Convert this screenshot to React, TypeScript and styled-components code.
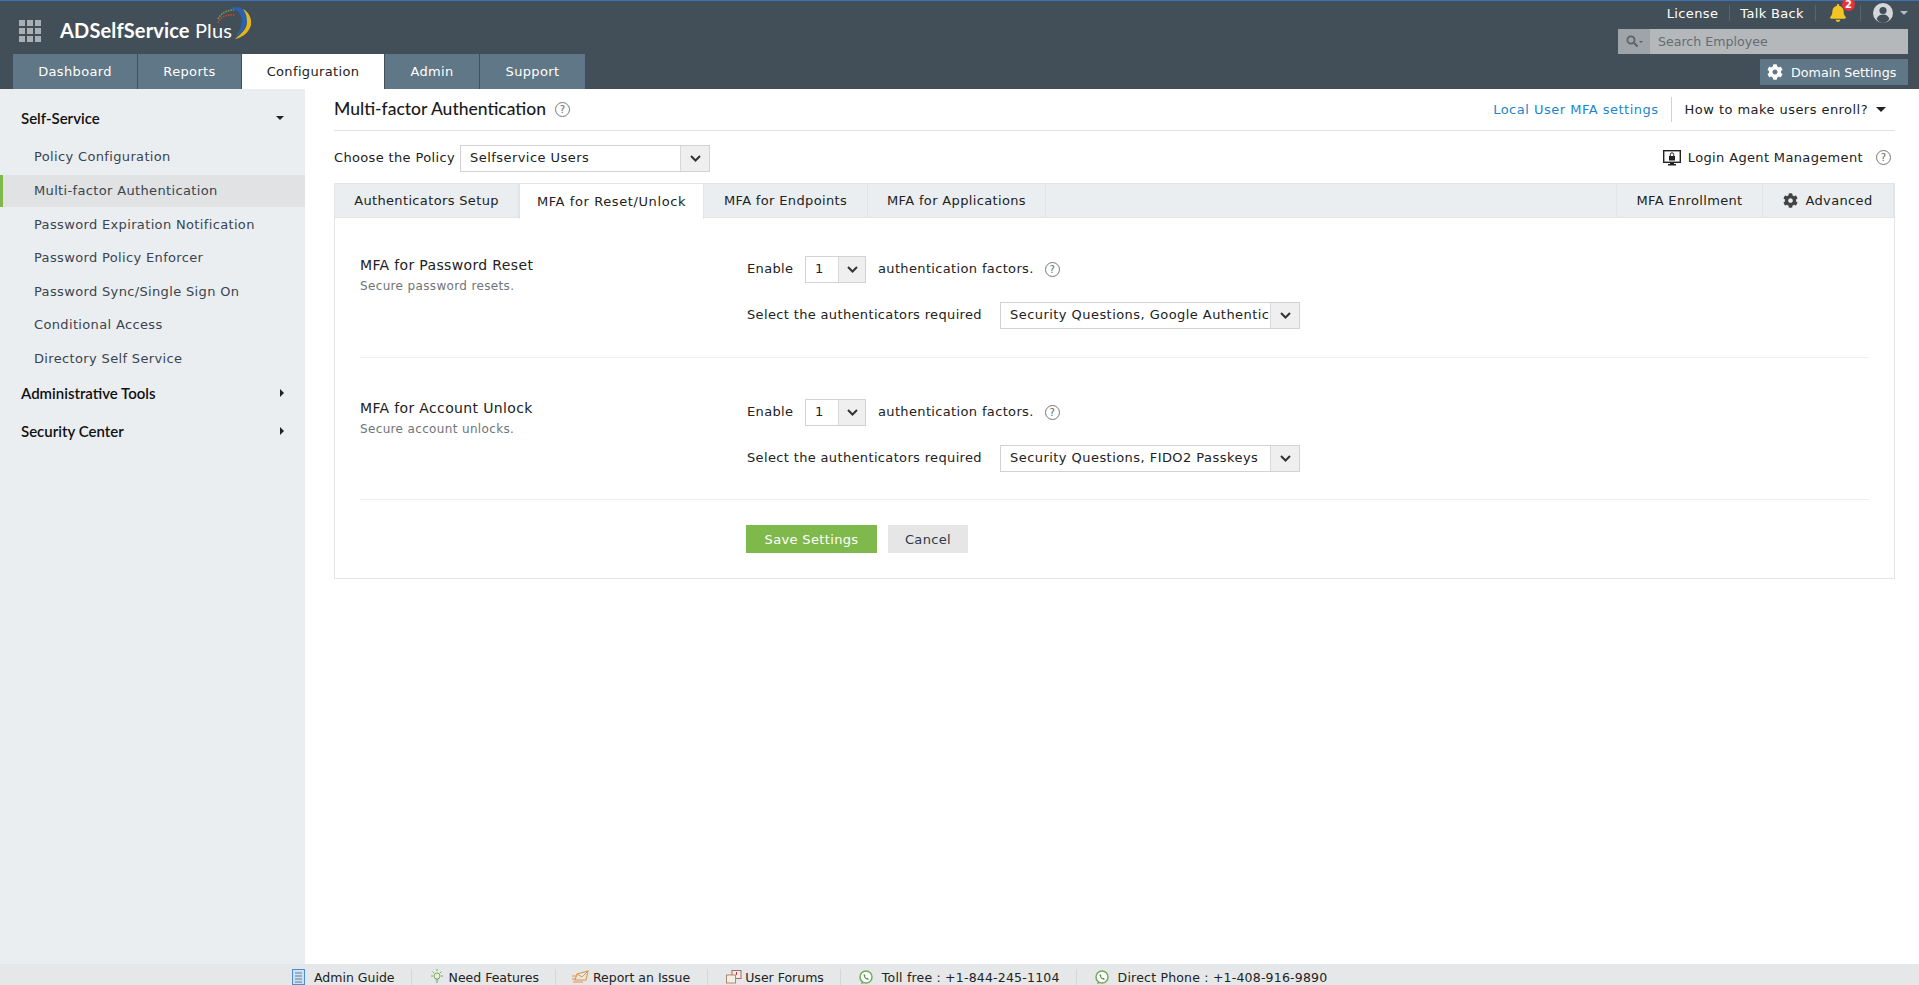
import styled, { createGlobalStyle } from "styled-components";
import { FaCog, FaBell } from "react-icons/fa";

const GlobalStyle = createGlobalStyle`
  html, body {
    margin: 0;
    padding: 0;
    height: 100%;
    overflow: hidden;
    background: #fff;
  }
  * {
    box-sizing: border-box;
  }
  body {
    font-family: "DejaVu Sans", Verdana, sans-serif;
    font-size: 13px;
    letter-spacing: 0.35px;
    color: #222;
  }
`;

const Page = styled.div`
  display: flex;
  flex-direction: column;
  width: 1919px;
  height: 985px;
  overflow: hidden;
`;

const Header = styled.header`
  display: flex;
  justify-content: space-between;
  height: 89px;
  flex: none;
  background: #424f58;
  border-top: 1px solid #3b74b4;
`;

const HeaderLeft = styled.div`
  display: flex;
  flex-direction: column;
  padding-left: 13px;
`;

const Brand = styled.div`
  display: flex;
  align-items: center;
  height: 53px;
  padding-left: 6px;
  position: relative;
`;

const AppGrid = styled.div`
  display: grid;
  grid-template-columns: repeat(3, 6px);
  grid-auto-rows: 6px;
  gap: 2px;
  margin-right: 18px;
  margin-top: 6px;

  span {
    background: #a9b0b5;
  }
`;

const BrandName = styled.div`
  font-family: Lato, sans-serif;
  font-size: 20px;
  color: #fff;
  margin: 4px 0 0 1px;
  letter-spacing: 0.15px;

  b {
    font-weight: 700;
  }

  span {
    font-weight: 400;
  }
`;

const Swoosh = styled.svg`
  position: absolute;
  left: 192px;
  top: 1px;
`;

const NavTabs = styled.nav`
  display: flex;
  height: 35px;
  gap: 1px;
`;

const NavTab = styled.div<{ $active?: boolean; $w: number }>`
  display: flex;
  align-items: center;
  justify-content: center;
  width: ${(p) => p.$w}px;
  background: ${(p) => (p.$active ? "#fff" : "#5f7786")};
  color: ${(p) => (p.$active ? "#222" : "#fff")};
`;

const HeaderRight = styled.div`
  display: flex;
  flex-direction: column;
  align-items: flex-end;
  padding-right: 11px;
`;

const TopLinks = styled.div`
  display: flex;
  align-items: center;
  height: 26px;
  padding-bottom: 2px;
  color: #fff;
`;

const TopLink = styled.div`
  padding: 0 10px;
  margin-right: 1px;
`;

const TopSep = styled.div`
  width: 1px;
  height: 16px;
  background: #56666c;
`;

const BellWrap = styled.div`
  position: relative;
  width: 31px;
  padding-left: 13px;
  margin-right: 13px;
  display: flex;
  align-items: center;
  color: #f3c522;
  font-size: 18px;
`;

const Badge = styled.span`
  position: absolute;
  left: 26px;
  top: -6px;
  width: 13px;
  height: 13px;
  border-radius: 50%;
  background: #e8303a;
  color: #fff;
  font-size: 10px;
  font-weight: 700;
  letter-spacing: 0;
  line-height: 13px;
  text-align: center;
`;

const Caret = styled.span<{ $color?: string; $dir?: "down" | "right"; $size?: number }>`
  display: inline-block;
  width: 0;
  height: 0;
  ${(p) =>
    p.$dir === "right"
      ? `border-top: ${p.$size ?? 4}px solid transparent;
         border-bottom: ${p.$size ?? 4}px solid transparent;
         border-left: ${p.$size ?? 4}px solid ${p.$color ?? "#222"};`
      : `border-left: ${p.$size ?? 4}px solid transparent;
         border-right: ${p.$size ?? 4}px solid transparent;
         border-top: ${p.$size ?? 4}px solid ${p.$color ?? "#222"};`}
`;

const Avatar = styled.svg`
  margin: 0 7px 0 12px;
`;

const SearchBox = styled.div`
  display: flex;
  width: 290px;
  height: 25px;
  margin-top: 2px;
  background: #b4b8bb;
`;

const SearchIcon = styled.div`
  display: flex;
  align-items: center;
  justify-content: center;
  gap: 1px;
  width: 32px;
  background: #9fa4a8;
`;

const SearchText = styled.div`
  display: flex;
  align-items: center;
  padding-left: 8px;
  font-size: 12.6px;
  letter-spacing: 0;
  color: #656d73;
`;

const DomainButton = styled.div`
  display: flex;
  align-items: center;
  width: 148px;
  height: 26px;
  margin-top: 5px;
  padding-left: 7px;
  gap: 8px;
  background: #5f7786;
  color: #fff;
  font-size: 16px;

  span {
    font-size: 12.7px;
    letter-spacing: 0;
  }
`;

const Body = styled.div`
  display: flex;
  flex: 1;
  min-height: 0;
`;

const Sidebar = styled.aside`
  width: 305px;
  flex: none;
  background: #ebeef0;
  padding-top: 12px;
`;

const SideHead = styled.div<{ $gap?: number }>`
  display: flex;
  align-items: center;
  justify-content: space-between;
  height: 34px;
  margin-top: ${(p) => p.$gap ?? 0}px;
  padding: 0 21px;
  font-family: Lato, sans-serif;
  font-size: 15px;
  font-weight: 600;
  letter-spacing: 0;
  color: #111;
`;

const SideList = styled.div`
  display: flex;
  flex-direction: column;
  margin-top: 5px;
`;

const SideItem = styled.div<{ $active?: boolean }>`
  display: flex;
  align-items: center;
  height: ${(p) => (p.$active ? 32 : 33.5)}px;
  margin: ${(p) => (p.$active ? "1px 0" : "0")};
  padding-left: ${(p) => (p.$active ? 31 : 34)}px;
  color: #3a4450;
  background: ${(p) => (p.$active ? "#e0e2e4" : "transparent")};
  border-left: ${(p) => (p.$active ? "3px solid #7fb94b" : "none")};
`;

const Main = styled.main`
  flex: 1;
  padding: 0 24px 0 29px;
`;

const TitleRow = styled.div`
  display: flex;
  align-items: center;
  height: 42px;
  border-bottom: 1px solid #e2e2e2;
`;

const Title = styled.h1`
  margin: 0 0 2px;
  font-family: Lato, sans-serif;
  font-size: 17.5px;
  font-weight: 500;
  letter-spacing: 0;
  color: #1b1b1b;
`;

const Help = styled.span<{ $left?: number }>`
  display: inline-block;
  flex: none;
  width: 15px;
  height: 15px;
  margin-left: ${(p) => p.$left ?? 0}px;
  border: 1px solid #777;
  border-radius: 50%;
  color: #666;
  font-size: 10px;
  letter-spacing: 0;
  line-height: 13px;
  text-align: center;
`;

const TitleActions = styled.div`
  display: flex;
  align-items: center;
  margin-left: auto;
  padding-right: 9px;
`;

const BlueLink = styled.a`
  color: #1d85cd;
  padding-right: 12px;
  border-right: 1px solid #d0d0d0;
  line-height: 25px;
  letter-spacing: 0.5px;
`;

const Enroll = styled.div`
  display: flex;
  align-items: center;
  gap: 8px;
  margin-left: 13px;
  letter-spacing: 0.45px;
`;

const PolicyRow = styled.div`
  display: flex;
  align-items: center;
  height: 52px;
  padding-top: 2px;
`;

const PolicyLabel = styled.span`
  width: 126px;
  margin-bottom: 2px;
`;

const SelectBox = styled.div<{ $w: number; $arrow: number }>`
  display: flex;
  width: ${(p) => p.$w}px;
  height: 27px;
  border: 1px solid #d0d2d4;
  background: #fff;
  flex: none;

  > span {
    flex: 1;
    min-width: 0;
    padding-left: 9px;
    white-space: nowrap;
    overflow: hidden;
    line-height: 24px;
    letter-spacing: 0.45px;
  }

  > i {
    display: flex;
    align-items: center;
    justify-content: center;
    flex: none;
    width: ${(p) => p.$arrow}px;
    background: #efefef;
    border-left: 1px solid #d8d8d8;
  }
`;

const AgentLink = styled.div`
  display: flex;
  align-items: center;
  margin: 0 0 1px auto;
  padding-right: 4px;
`;

const AgentIcon = styled.svg`
  margin-right: 7px;
`;

const TabBar = styled.div`
  display: flex;
  height: 35px;
  background: #ebeef0;
  border: 1px solid #e2e4e6;
`;

const PanelTab = styled.div<{ $w: number; $active?: boolean }>`
  display: flex;
  align-items: center;
  justify-content: center;
  gap: 7px;
  width: ${(p) => p.$w}px;
  height: ${(p) => (p.$active ? 35 : 33)}px;
  background: ${(p) => (p.$active ? "#fff" : "transparent")};
  border-right: 1px solid #e2e4e6;
  border-left: ${(p) => (p.$active ? "1px solid #e2e4e6" : "none")};
  letter-spacing: ${(p) => (p.$active ? 0.6 : 0.35)}px;
`;

const TabSpacer = styled.div`
  flex: 1;
  border-right: 1px solid #e2e4e6;
`;

const Panel = styled.section`
  height: 361px;
  padding: 0 25px;
  border: 1px solid #e2e4e6;
  border-top: none;
`;

const FactorRow = styled.div<{ $h: number; $top: number }>`
  display: grid;
  grid-template-columns: 387px 1fr;
  height: ${(p) => p.$h}px;
  border-bottom: 1px solid #eeeeee;
  padding-top: ${(p) => p.$top}px;
`;

const FactorTitle = styled.div`
  font-size: 14px;
  line-height: 20px;
  margin-top: -1px;
  color: #222;
`;

const FactorSub = styled.div`
  font-size: 12px;
  line-height: 16px;
  margin-top: 3px;
  color: #6f7478;
`;

const Line = styled.div`
  display: flex;
  align-items: center;
  height: 27px;
  margin-bottom: 19px;
`;

const EnableLabel = styled.span`
  width: 58px;
  margin-bottom: 2px;
`;

const FactorsLabel = styled.span`
  margin: 0 0 2px 12px;
`;

const RequiredLabel = styled.span`
  width: 253px;
  margin-bottom: 2px;
`;

const Buttons = styled.div`
  display: flex;
  gap: 11px;
  padding: 25px 0 0 386px;
`;

const Btn = styled.div<{ $w: number; $primary?: boolean }>`
  display: flex;
  align-items: center;
  justify-content: center;
  width: ${(p) => p.$w}px;
  height: 28px;
  background: ${(p) => (p.$primary ? "#7fb94b" : "#e6e6e6")};
  color: ${(p) => (p.$primary ? "#fff" : "#2b3a4a")};
`;

const Footer = styled.footer`
  display: flex;
  align-items: flex-start;
  height: 21px;
  flex: none;
  padding: 5px 0 0 292px;
  background: #e5e7e8;
  font-size: 12.5px;
  letter-spacing: 0;
  color: #222;
`;

const FootItem = styled.div<{ $gap: number; $phone?: boolean }>`
  display: flex;
  align-items: center;
  gap: ${(p) => p.$gap}px;
  height: 16px;
  white-space: nowrap;
  letter-spacing: ${(p) => (p.$phone ? 0.2 : 0)}px;
`;

const FootSep = styled.div<{ $left: number; $right: number }>`
  width: 1px;
  height: 16px;
  margin: 0 ${(p) => p.$right}px 0 ${(p) => p.$left}px;
  background: #d4d8da;
`;

function Chevron() {
  return (
    <svg width="11" height="7" viewBox="0 0 11 7">
      <path d="M1 1l4.5 4.5L10 1" fill="none" stroke="#333" strokeWidth="2" />
    </svg>
  );
}

function Select({ w, arrow, value }: { w: number; arrow: number; value: string }) {
  return (
    <SelectBox $w={w} $arrow={arrow}>
      <span>{value}</span>
      <i>
        <Chevron />
      </i>
    </SelectBox>
  );
}

function LogoArcs() {
  return (
    <Swoosh width="60" height="45" viewBox="0 0 60 45">
      <path d="M25 6C33 3 40 7 42 13 44 21 38 31 30 35 36 28 38 20 36 14 34 9 30 7 25 6z" fill="#2a62ad" />
      <path d="M38 7C44 10 47 17 46 23 44 31 36 36 30 37 36 32 42 27 42 20 42 15 41 11 38 7z" fill="#e6b71c" />
      <path d="M13 17C16 11 22 8 29 8" fill="none" stroke="#6f9a5a" strokeWidth="1.6" strokeDasharray="1.6 1" />
      <path d="M13 21C15 15 22 12 30 13" fill="none" stroke="#d0402f" strokeWidth="1.6" strokeDasharray="1.6 1" />
    </Swoosh>
  );
}

function AvatarIcon() {
  return (
    <Avatar width="20" height="20" viewBox="0 0 20 20">
      <circle cx="10" cy="10" r="10" fill="#d4d8da" />
      <circle cx="10" cy="7.5" r="3.6" fill="#424f58" />
      <path d="M3.6 16c1-3.4 3.6-4.6 6.4-4.6s5.4 1.2 6.4 4.6C14.8 18.6 12.4 20 10 20s-4.8-1.4-6.4-4z" fill="#424f58" />
    </Avatar>
  );
}

function SearchGlyph() {
  return (
    <svg width="12" height="13" viewBox="0 0 12 13">
      <circle cx="5" cy="5" r="3.6" fill="none" stroke="#5b6267" strokeWidth="1.7" />
      <path d="M8 8l3.5 3.5" stroke="#5b6267" strokeWidth="2" />
    </svg>
  );
}

function MonitorLock() {
  return (
    <AgentIcon width="18" height="16" viewBox="0 0 18 16">
      <rect x="0.7" y="0.7" width="16.6" height="11.6" fill="none" stroke="#222" strokeWidth="1.4" />
      <rect x="6" y="6" width="6" height="4.5" fill="#222" />
      <path d="M7.3 6V4.5a1.7 1.7 0 0 1 3.4 0V6" fill="none" stroke="#222" />
      <path d="M7 12.5h4V14h2v1.5H5V14h2z" fill="#222" />
    </AgentIcon>
  );
}

function GuideIcon() {
  return (
    <svg width="13" height="16" viewBox="0 0 13 16">
      <rect x="0.5" y="0.5" width="12" height="15" fill="#cfe0f0" stroke="#4a90d0" />
      <path d="M3 4h7M3 7h7M3 10h7M3 13h7" stroke="#5f7f9f" />
    </svg>
  );
}

function BulbIcon() {
  return (
    <svg width="14" height="16" viewBox="0 0 14 16">
      <circle cx="7" cy="7" r="3" fill="#e6f2d8" stroke="#79ad62" />
      <path d="M5.5 11h3M6 13h2" stroke="#7a8f7a" />
      <path d="M7 0v2M1 7h2M11 7h2M2.5 2.5L4 4M11.5 2.5L10 4" stroke="#79ad62" />
    </svg>
  );
}

function ReportIcon() {
  return (
    <svg width="17" height="15" viewBox="0 0 17 15">
      <path d="M5 4l11-3-2 9H3z" fill="none" stroke="#e2944a" strokeWidth="1.1" />
      <path d="M5 4l5 3 6-6M0 6h4M0 9h3M1 12h10" fill="none" stroke="#e2944a" />
    </svg>
  );
}

function ForumIcon() {
  return (
    <svg width="16" height="15" viewBox="0 0 16 15">
      <rect x="6" y="0.5" width="9" height="8" fill="#f6e9e9" stroke="#a56a6a" />
      <rect x="0.5" y="5" width="9" height="8" fill="#f4efe6" stroke="#b08a6a" />
      <path d="M10.5 2v3" stroke="#c04040" />
    </svg>
  );
}

function PhoneIcon() {
  return (
    <svg width="14" height="15" viewBox="0 0 14 15">
      <circle cx="7" cy="7" r="6" fill="#fff" stroke="#6fae5a" strokeWidth="1.5" />
      <path d="M2 14l1-3 2 2z" fill="#6fae5a" />
      <path d="M5 4c-1 1 0 3 1 4.2s3 2 4 1l-1.5-1.5-1 .5-1.5-1.7.5-1z" fill="#5a8a5a" />
    </svg>
  );
}

const navTabs = [
  { label: "Dashboard", w: 124 },
  { label: "Reports", w: 103 },
  { label: "Configuration", w: 142, active: true },
  { label: "Admin", w: 94 },
  { label: "Support", w: 105 },
];

const sideItems = [
  "Policy Configuration",
  "Multi-factor Authentication",
  "Password Expiration Notification",
  "Password Policy Enforcer",
  "Password Sync/Single Sign On",
  "Conditional Access",
  "Directory Self Service",
];

export default function App() {
  return (
    <Page>
      <GlobalStyle />
      <Header>
        <HeaderLeft>
          <Brand>
            <AppGrid>
              {Array.from({ length: 9 }).map((_, i) => (
                <span key={i} />
              ))}
            </AppGrid>
            <BrandName>
              <b>ADSelfService</b> <span>Plus</span>
            </BrandName>
            <LogoArcs />
          </Brand>
          <NavTabs>
            {navTabs.map((t) => (
              <NavTab key={t.label} $w={t.w} $active={t.active}>
                {t.label}
              </NavTab>
            ))}
          </NavTabs>
        </HeaderLeft>
        <HeaderRight>
          <TopLinks>
            <TopLink>License</TopLink>
            <TopSep />
            <TopLink>Talk Back</TopLink>
            <TopSep />
            <BellWrap>
              <FaBell />
              <Badge>2</Badge>
            </BellWrap>
            <TopSep />
            <AvatarIcon />
            <Caret $color="#b4babd" />
          </TopLinks>
          <SearchBox>
            <SearchIcon>
              <SearchGlyph />
              <Caret $color="#5b6267" $size={2} />
            </SearchIcon>
            <SearchText>Search Employee</SearchText>
          </SearchBox>
          <DomainButton>
            <FaCog />
            <span>Domain Settings</span>
          </DomainButton>
        </HeaderRight>
      </Header>
      <Body>
        <Sidebar>
          <SideHead>
            Self-Service
            <Caret $size={4} />
          </SideHead>
          <SideList>
            {sideItems.map((s) => (
              <SideItem key={s} $active={s === "Multi-factor Authentication"}>
                {s}
              </SideItem>
            ))}
          </SideList>
          <SideHead $gap={1}>
            Administrative Tools
            <Caret $dir="right" />
          </SideHead>
          <SideHead $gap={4}>
            Security Center
            <Caret $dir="right" />
          </SideHead>
        </Sidebar>
        <Main>
          <TitleRow>
            <Title>Multi-factor Authentication</Title>
            <Help $left={9}>?</Help>
            <TitleActions>
              <BlueLink>Local User MFA settings</BlueLink>
              <Enroll>
                How to make users enroll?
                <Caret $size={5} />
              </Enroll>
            </TitleActions>
          </TitleRow>
          <PolicyRow>
            <PolicyLabel>Choose the Policy</PolicyLabel>
            <Select w={250} arrow={29} value="Selfservice Users" />
            <AgentLink>
              <MonitorLock />
              Login Agent Management
              <Help $left={13}>?</Help>
            </AgentLink>
          </PolicyRow>
          <TabBar>
            <PanelTab $w={184}>Authenticators Setup</PanelTab>
            <PanelTab $w={185} $active>
              MFA for Reset/Unlock
            </PanelTab>
            <PanelTab $w={164}>MFA for Endpoints</PanelTab>
            <PanelTab $w={178}>MFA for Applications</PanelTab>
            <TabSpacer />
            <PanelTab $w={146}>MFA Enrollment</PanelTab>
            <PanelTab $w={131}>
              <FaCog size={15} color="#444" />
              Advanced
            </PanelTab>
          </TabBar>
          <Panel>
            <FactorRow $h={140} $top={38}>
              <div>
                <FactorTitle>MFA for Password Reset</FactorTitle>
                <FactorSub>Secure password resets.</FactorSub>
              </div>
              <div>
                <Line>
                  <EnableLabel>Enable</EnableLabel>
                  <Select w={61} arrow={27} value="1" />
                  <FactorsLabel>authentication factors.</FactorsLabel>
                  <Help $left={11}>?</Help>
                </Line>
                <Line>
                  <RequiredLabel>Select the authenticators required</RequiredLabel>
                  <Select w={300} arrow={29} value="Security Questions, Google Authentic" />
                </Line>
              </div>
            </FactorRow>
            <FactorRow $h={142} $top={41}>
              <div>
                <FactorTitle>MFA for Account Unlock</FactorTitle>
                <FactorSub>Secure account unlocks.</FactorSub>
              </div>
              <div>
                <Line>
                  <EnableLabel>Enable</EnableLabel>
                  <Select w={61} arrow={27} value="1" />
                  <FactorsLabel>authentication factors.</FactorsLabel>
                  <Help $left={11}>?</Help>
                </Line>
                <Line>
                  <RequiredLabel>Select the authenticators required</RequiredLabel>
                  <Select w={300} arrow={29} value="Security Questions, FIDO2 Passkeys" />
                </Line>
              </div>
            </FactorRow>
            <Buttons>
              <Btn $w={131} $primary>
                Save Settings
              </Btn>
              <Btn $w={80}>Cancel</Btn>
            </Buttons>
          </Panel>
        </Main>
      </Body>
      <Footer>
        <FootItem $gap={9}>
          <GuideIcon />
          Admin Guide
        </FootItem>
        <FootSep $left={16} $right={18} />
        <FootItem $gap={5}>
          <BulbIcon />
          Need Features
        </FootItem>
        <FootSep $left={16} $right={16} />
        <FootItem $gap={4}>
          <ReportIcon />
          Report an Issue
        </FootItem>
        <FootSep $left={17} $right={18} />
        <FootItem $gap={3}>
          <ForumIcon />
          User Forums
        </FootItem>
        <FootSep $left={16} $right={18} />
        <FootItem $gap={9} $phone>
          <PhoneIcon />
          Toll free : +1-844-245-1104
        </FootItem>
        <FootSep $left={16} $right={18} />
        <FootItem $gap={9} $phone>
          <PhoneIcon />
          Direct Phone : +1-408-916-9890
        </FootItem>
      </Footer>
    </Page>
  );
}
